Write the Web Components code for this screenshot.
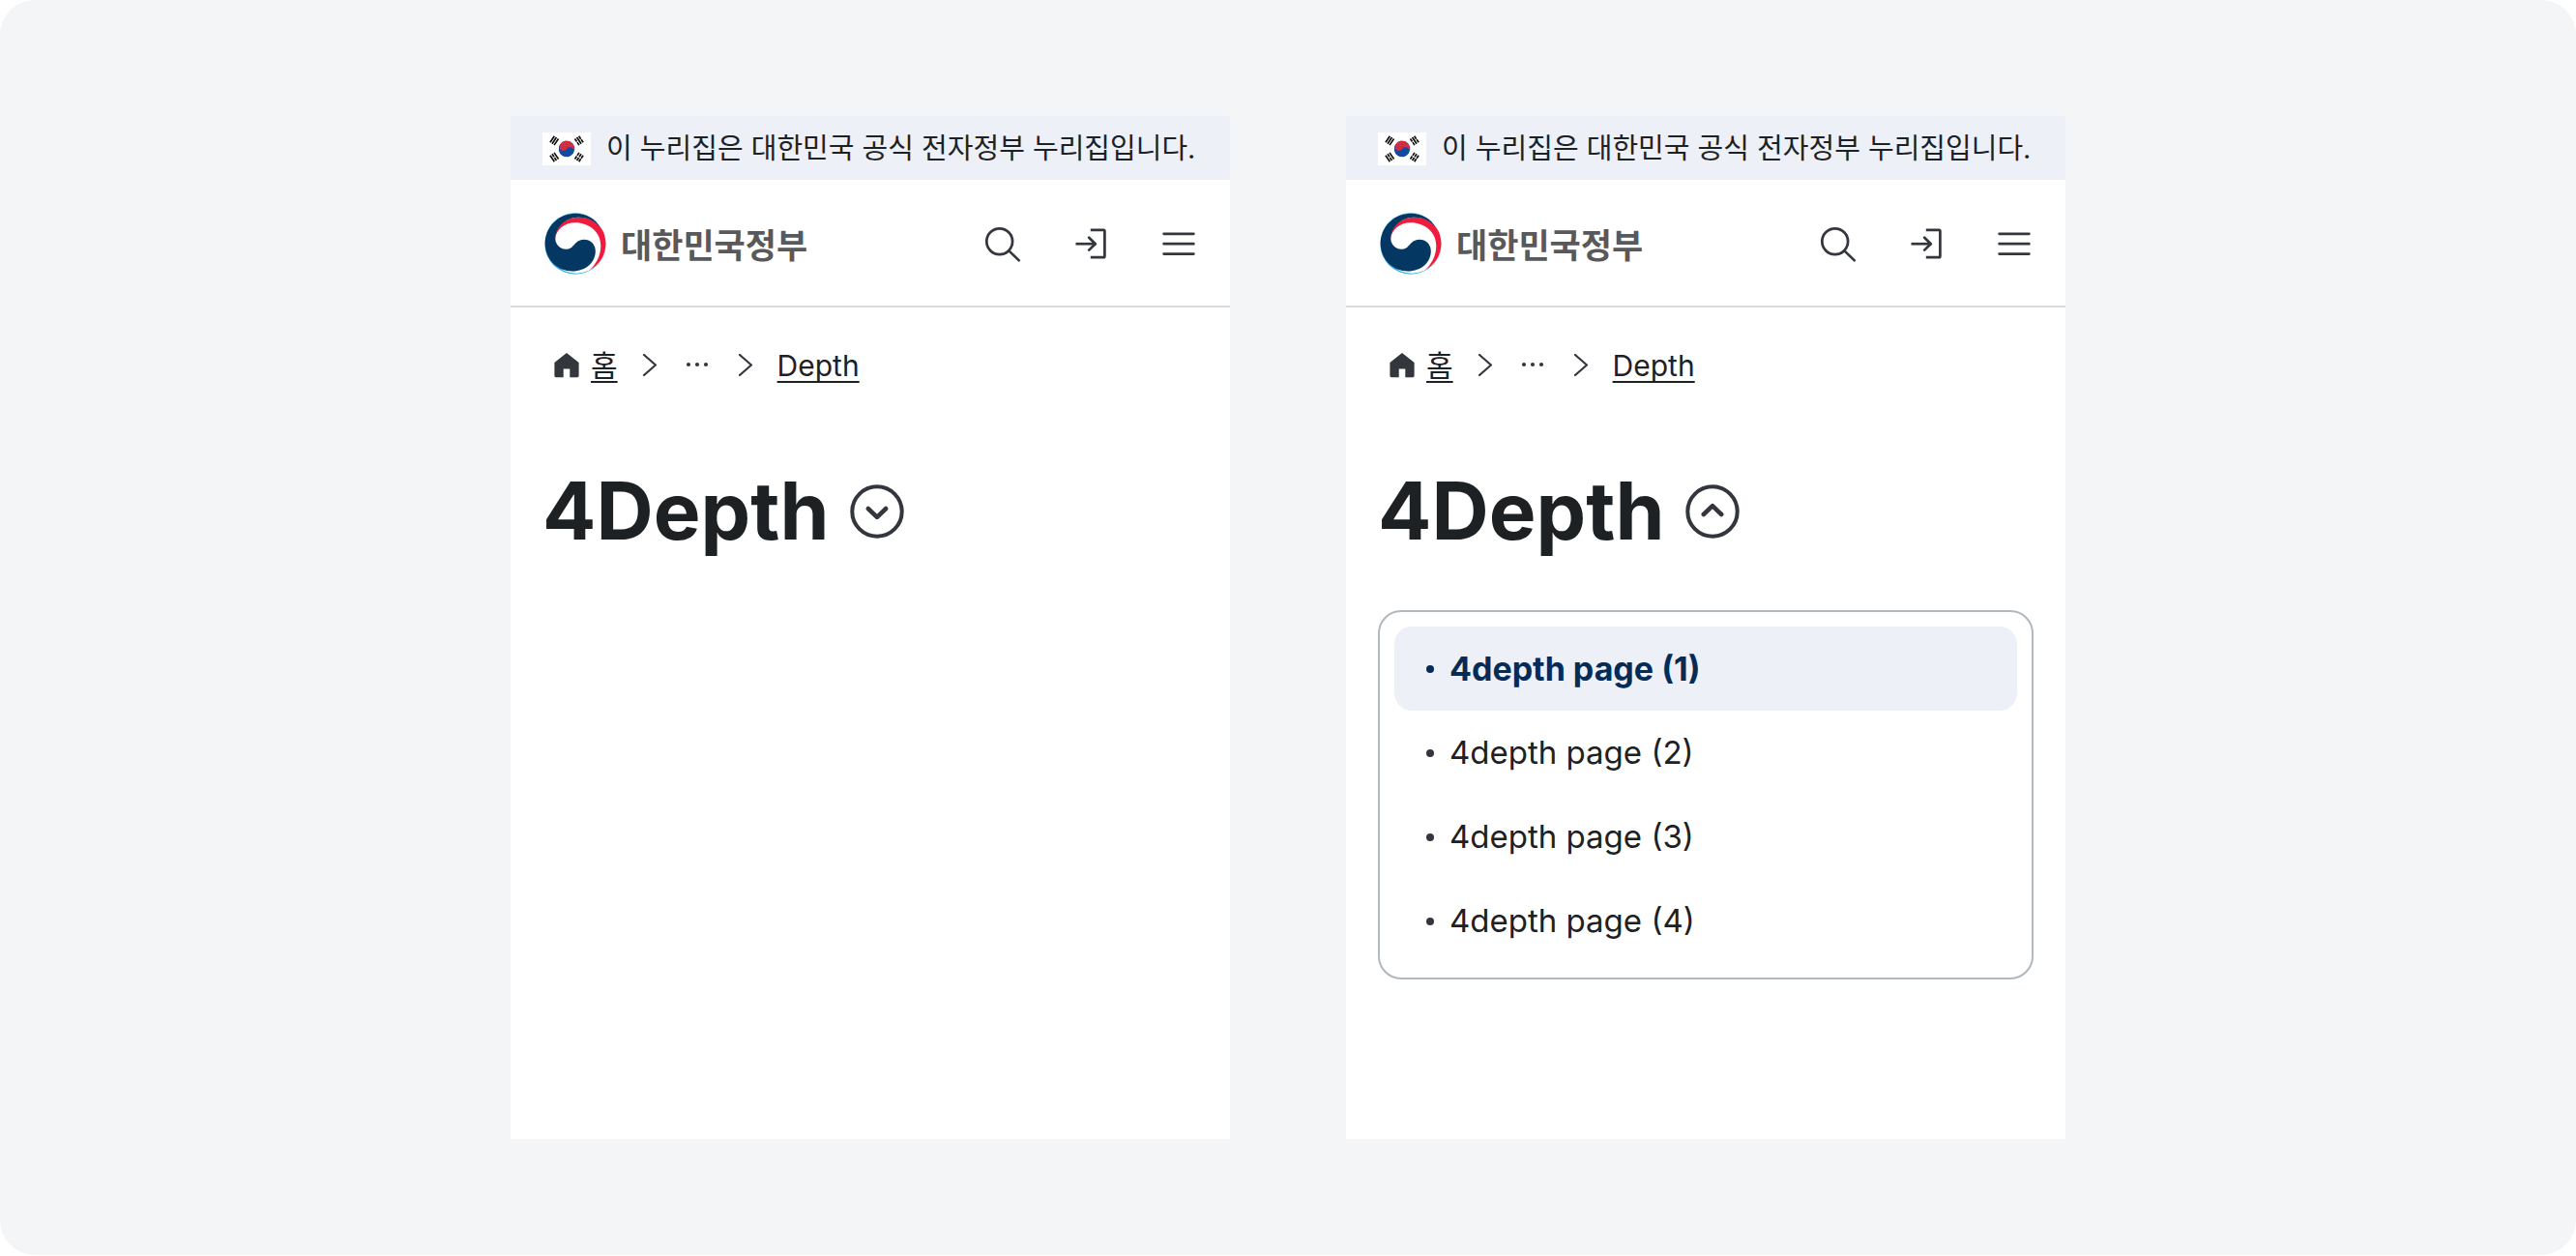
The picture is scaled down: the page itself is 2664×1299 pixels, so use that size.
<!DOCTYPE html>
<html lang="ko">
<head>
<meta charset="utf-8">
<meta name="viewport" content="width=device-width, initial-scale=1">
<title>4Depth</title>
<style>
  body {
    margin: 0;
    min-height: 100vh;
    background: #fff;
    color: #1e2124;
    font-family: Inter, "Noto Sans CJK KR", sans-serif;
  }
</style>
</head>
<body>
<demo-stage>
  <site-frame>
    <gov-banner>이 누리집은 대한민국 공식 전자정부 누리집입니다.</gov-banner>
    <site-header>대한민국정부</site-header>
    <site-breadcrumb current="Depth">홈</site-breadcrumb>
    <depth-title>4Depth</depth-title>
  </site-frame>
  <site-frame>
    <gov-banner>이 누리집은 대한민국 공식 전자정부 누리집입니다.</gov-banner>
    <site-header>대한민국정부</site-header>
    <site-breadcrumb current="Depth">홈</site-breadcrumb>
    <depth-title open>4Depth
      <depth-menu slot="menu">
        <depth-item active>4depth page (1)</depth-item>
        <depth-item>4depth page (2)</depth-item>
        <depth-item>4depth page (3)</depth-item>
        <depth-item>4depth page (4)</depth-item>
      </depth-menu>
    </depth-title>
  </site-frame>
</demo-stage>

<script>
  const reset = `
    *, *::before, *::after { box-sizing: border-box; }
    button { margin: 0; padding: 0; border: 0; background: none; color: inherit; font: inherit; cursor: pointer; }
    a { color: inherit; text-decoration: none; }
    svg { display: block; flex: none; }
    :focus-visible { outline: 3px solid #256ef4; outline-offset: 2px; }
  `;

  function define(name, css, html, setup) {
    customElements.define(name, class extends HTMLElement {
      constructor() {
        super();
        this.attachShadow({ mode: 'open' }).innerHTML = `<style>${reset}${css}</style>${html}`;
      }
      connectedCallback() {
        if (setup) setup(this, this.shadowRoot);
      }
    });
  }

  define('demo-stage', `
    :host {
      display: flex;
      justify-content: center;
      gap: 120px;
      box-sizing: border-box;
      min-height: calc(100vh - 1px);
      padding: 120px;
      border-radius: 36px;
      background: #f4f5f7;
    }
  `, `<slot></slot>`);

  define('site-frame', `
    :host { display: block; flex: 0 1 744px; min-width: 0; background: #fff; }
  `, `<slot></slot>`);

  define('gov-banner', `
    :host {
      display: flex;
      align-items: center;
      gap: 16px;
      padding: 16px 33px 14px;
      background: #edf0f6;
      font-size: 29px;
      line-height: 36px;
    }
    span { white-space: nowrap; }
  `, `
    <svg width="50" height="34" viewBox="0 0 50 34" role="img" aria-label="태극기">
      <rect width="50" height="34" fill="#fff"/>
      <g transform="translate(25 17) rotate(33.7)">
        <circle r="8.3" fill="#1349a0"/>
        <path d="M-8.3 0A8.3 8.3 0 0 1 8.3 0A4.15 4.15 0 0 0 0 0A4.15 4.15 0 0 1 -8.3 0Z" fill="#d02f3d"/>
      </g>
      <g stroke="#111" stroke-width="1.7" fill="none">
        <path transform="translate(12.2 8.4) rotate(-56.3)" d="M-4 -2.5H4M-4 0H4M-4 2.5H4"/>
        <path transform="translate(37.8 8.4) rotate(56.3)" d="M-4 -2.5H-.4M.4 -2.5H4M-4 0H4M-4 2.5H-.4M.4 2.5H4"/>
        <path transform="translate(12.2 25.6) rotate(56.3)" d="M-4 -2.5H4M-4 0H-.4M.4 0H4M-4 2.5H4"/>
        <path transform="translate(37.8 25.6) rotate(-56.3)" d="M-4 -2.5H-.4M.4 -2.5H4M-4 0H-.4M.4 0H4M-4 2.5H-.4M.4 2.5H4"/>
      </g>
    </svg>
    <span><slot></slot></span>
  `);

  define('site-header', `
    header {
      display: flex;
      align-items: center;
      justify-content: space-between;
      padding: 34px 23px 32px 35px;
      border-bottom: 2px solid #d8dadc;
    }
    .logo {
      display: flex;
      align-items: center;
      gap: 15px;
      color: #58595b;
      font-family: "Noto Sans CJK KR", sans-serif;
      font-size: 35px;
      font-weight: 700;
      line-height: 64px;
      white-space: nowrap;
    }
    .tools { display: flex; gap: 31px; }
    button { display: grid; place-items: center; width: 60px; height: 60px; }
    .tools svg { fill: none; stroke: #33363d; stroke-width: 2.7; stroke-linecap: round; stroke-linejoin: round; }
    :host { display: block; }
  `, `
    <header>
      <a class="logo" href="#">
        <svg width="64" height="64" viewBox="0 0 64 64" aria-hidden="true">
          <circle cx="32" cy="32" r="31.7" fill="#35b6e6"/>
          <circle cx="33" cy="31.700" r="31" fill="#fff"/>
          <path d="M11.300 27C10.500 14 22 4.700 36 4.700C51 4.700 63.500 15 63.500 32C63.500 44 56.500 54.500 46.500 59.300C53 54 58.300 45 58.300 34C58.300 20 46 10.300 32 10.300C20 10.300 12 18 11.300 27Z" fill="#f01c3c"/>
          <path d="M58 15.500C53 6.500 43.500 .8 32 .8C14.800 .8 .8 14.800 .8 32C.8 48 13 60.500 29 60.500C43 60.500 52.800 51 52.800 40C52.800 32.500 47.500 27.800 41 27.800C31 27.800 31 37.800 22.300 37.800C16 37.800 10.800 32.500 11.300 25.500C12.500 13 23 4.700 36 4.700C45 4.700 53 9 58 15.500Z" fill="#043762"/>
        </svg>
        <slot></slot>
      </a>
      <div class="tools">
        <button type="button" aria-label="검색">
          <svg width="42" height="42" viewBox="0 0 42 42"><circle cx="17.700" cy="18.700" r="13.400"/><path d="M27.400 28.400L37.800 38.400"/></svg>
        </button>
        <button type="button" aria-label="로그인">
          <svg width="42" height="42" viewBox="0 0 42 42"><path stroke-linecap="butt" d="M20.800 6.900H34.200Q35.400 6.900 35.400 8.100V34Q35.400 35.200 34.200 35.200H20.800"/><path stroke-linecap="butt" d="M5.500 21.200H26"/><path d="M19.200 14.800L25.800 21.200L19.200 27.600"/></svg>
        </button>
        <button type="button" aria-label="전체메뉴">
          <svg width="42" height="42" viewBox="0 0 42 42"><path d="M5.600 10.800H36.400M5.600 21.200H36.400M5.600 31.600H36.400"/></svg>
        </button>
      </div>
    </header>
  `);

  define('site-breadcrumb', `
    :host { display: block; padding: 42px 45px; font-size: 30px; line-height: 36px; }
    ol { display: flex; align-items: center; margin: 0; padding: 0; list-style: none; }
    li { display: flex; align-items: center; }
    .text { text-decoration: underline; text-decoration-thickness: 2px; text-underline-offset: 5px; text-decoration-skip-ink: none; }
    .home { display: flex; align-items: center; gap: 12px; }
    .arrow { margin: 0 24px; }
    .arrow path { fill: none; stroke: #33363d; stroke-width: 2.2; stroke-linecap: round; stroke-linejoin: round; }
    button { width: 33px; height: 36px; display: grid; place-items: center; }
  `, `
    <nav aria-label="브레드크럼">
      <ol>
        <li>
          <a class="home" href="#">
            <svg width="26" height="26" viewBox="0 0 26 26" aria-hidden="true"><path d="M13 0L25.600 10V23.800Q25.600 25.200 24.200 25.200H16.300V16.500H9.700V25.200H1.800Q.4 25.200 .4 23.800V10Z" fill="#33363d"/></svg>
            <span class="text"><slot></slot></span>
          </a>
        </li>
        <li>
          <svg class="arrow" width="18" height="24" viewBox="0 0 18 24" aria-hidden="true"><path d="M3 1L15 11.500L3 22"/></svg>
          <button type="button" aria-label="중간 경로 보기">
            <svg width="24" height="8" viewBox="0 0 24 8"><g fill="#33363d"><circle cx="3" cy="3" r="2.100"/><circle cx="12" cy="3" r="2.100"/><circle cx="21" cy="3" r="2.100"/></g></svg>
          </button>
        </li>
        <li>
          <svg class="arrow" width="18" height="24" viewBox="0 0 18 24" aria-hidden="true"><path d="M3 1L15 11.500L3 22"/></svg>
          <a class="text current" href="#"></a>
        </li>
      </ol>
    </nav>
  `, (host, root) => {
    root.querySelector('.current').textContent = host.getAttribute('current');
  });

  define('depth-title', `
    :host { display: block; padding: 42px 33px 0; }
    .row { display: flex; align-items: center; gap: 21px; }
    h1 { margin: 0; font-size: 82px; font-weight: 700; line-height: 97px; }
    .panel { display: none; margin-top: 54px; }
    :host([open]) .panel { display: block; }
    :host([open]) .mark { transform: rotate(180deg); transform-origin: center; }
    svg { fill: none; stroke: #33363d; stroke-width: 4; stroke-linecap: round; stroke-linejoin: round; }
    button { border-radius: 50%; }
  `, `
    <div class="row">
      <h1><slot></slot></h1>
      <button type="button" aria-label="하위 메뉴">
        <svg width="56" height="56" viewBox="0 0 56 56"><circle cx="28" cy="28" r="25.700"/><path class="mark" stroke-width="4.600" d="M18.800 25L28 33.800L37.200 25"/></svg>
      </button>
    </div>
    <div class="panel"><slot name="menu"></slot></div>
  `, (host, root) => {
    const button = root.querySelector('button');
    const sync = () => button.setAttribute('aria-expanded', host.hasAttribute('open'));
    button.addEventListener('click', () => { host.toggleAttribute('open'); sync(); });
    sync();
  });

  define('depth-menu', `
    :host { display: block; }
    div { padding: 15px; border: 2px solid #b1b8be; border-radius: 24px; background: #fff; }
  `, `<div role="list"><slot></slot></div>`);

  define('depth-item', `
    :host { display: block; }
    a {
      display: flex;
      align-items: center;
      gap: 16px;
      padding: 24px 33px;
      border-radius: 18px;
      font-size: 33px;
      line-height: 39px;
    }
    a::before { content: ""; flex: none; width: 8px; height: 8px; border-radius: 50%; background: #33363d; }
    :host([active]) a { background: #edf0f6; color: #052b57; font-size: 34px; font-weight: 700; }
    :host([active]) a::before { background: currentColor; }
  `, `<a href="#"><slot></slot></a>`, host => host.setAttribute('role', 'listitem'));
</script>
</body>
</html>
